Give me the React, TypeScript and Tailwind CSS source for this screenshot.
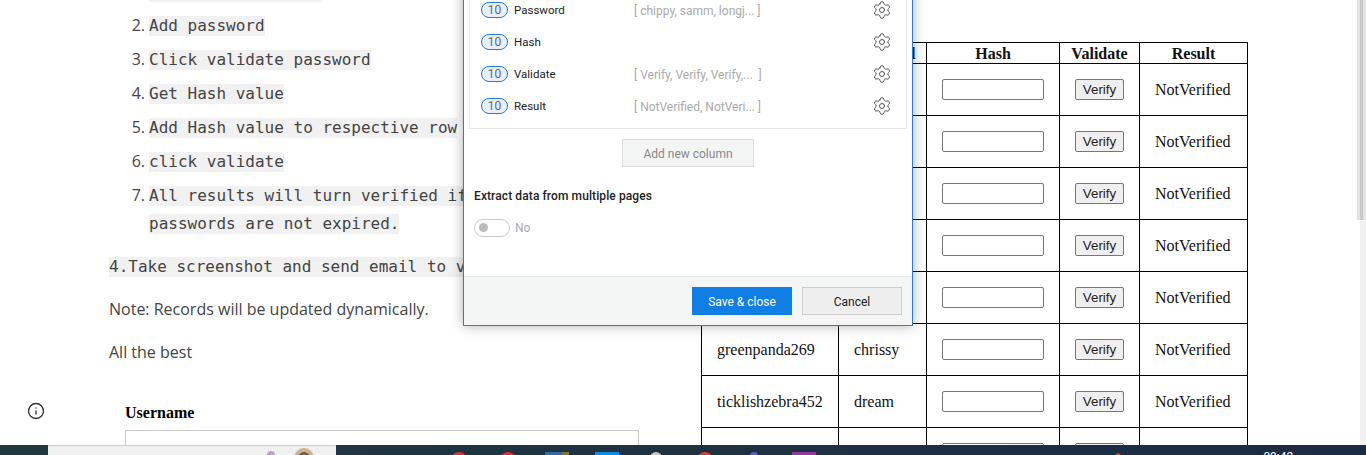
import { Info, Settings } from "lucide-react";

const steps = [
  ["1.", ["Open password page"]],
  ["2.", ["Add password"]],
  ["3.", ["Click validate password"]],
  ["4.", ["Get Hash value"]],
  ["5.", ["Add Hash value to respective row"]],
  ["6.", ["click validate"]],
  ["7.", ["All results will turn verified if", "passwords are not expired."]],
] as const;

const columns = [
  { name: "Password", preview: "[ chippy, samm, longj... ]" },
  { name: "Hash", preview: "" },
  { name: "Validate", preview: "[ Verify, Verify, Verify,...  ]" },
  { name: "Result", preview: "[ NotVerified, NotVeri... ]" },
];

const rows = [
  ["", ""],
  ["", ""],
  ["", ""],
  ["", ""],
  ["", ""],
  ["greenpanda269", "chrissy"],
  ["ticklishzebra452", "dream"],
  ["", ""],
];

function TableRow({ row }: { row: string[] }) {
  return (
    <tr className="h-[52px]">
      <td className="border border-black pl-[15px]">{row[0]}</td>
      <td className="border border-black pl-[15px]">{row[1]}</td>
      <td className="border border-black">
        <input className="mx-auto block h-[21px] w-[102px] rounded-[2px] border border-[#767676] bg-white" />
      </td>
      <td className="border border-black">
        <button className="mx-auto block h-[21px] w-[49px] rounded-[2px] border border-[#767676] bg-[#efefef] font-['Liberation_Sans',sans-serif] text-[13.33px] leading-none text-[#222]">
          Verify
        </button>
      </td>
      <td className="border border-black pl-[15px]">NotVerified</td>
    </tr>
  );
}

function ExtractDialog() {
  return (
    <div className="absolute left-[463px] top-[-10px] z-10 flex h-[336px] w-[450px] flex-col border border-[#2b7cd3] bg-white font-['Roboto',sans-serif] text-[12px] shadow-[0_0_12px_rgba(0,0,0,0.3)]">
      <div className="mx-[5px] mt-[2px] border border-[#e6e6e6] pb-[6px] pl-[11px] pr-[14px]">
        {columns.map((col) => (
          <div key={col.name} className="flex h-8 items-center">
            <span className="flex h-[16px] w-[27px] items-center justify-center rounded-full border border-[#2b7cd3] bg-[#e6f0fb] text-[12px] text-[#666]">
              10
            </span>
            <span className="ml-[6px] w-[120px] pt-px text-[11.5px] text-[#222]">{col.name}</span>
            <span className="flex-1 whitespace-pre pt-px text-[#aaa]">{col.preview}</span>
            <Settings size={20} strokeWidth={1.2} className="-mt-px text-[#555]" />
          </div>
        ))}
      </div>
      <button className="mx-auto mt-[10px] h-[28px] w-[132px] border border-[#ddd] bg-[#f4f5f5] pt-px text-[#888]">
        Add new column
      </button>
      <div className="ml-[10px] mt-5 font-medium tracking-[0.1px] text-[#222]">Extract data from multiple pages</div>
      <div className="ml-[10px] mt-[13px] flex items-center gap-[5px] text-[#aaa]">
        <span className="flex h-[18px] w-[36px] items-center rounded-full border border-[#ccc] pl-[4px]">
          <span className="size-[9px] rounded-full bg-[#bbb]" />
        </span>
        <span className="pt-px">No</span>
      </div>
      <div className="mt-auto flex h-[49px] items-start justify-end gap-[10px] border-t border-[#e6e6e6] bg-[#f4f5f5] pr-[10px] pt-[10px]">
        <button className="h-[28px] w-[100px] bg-[#107ee4] pt-px text-white">Save &amp; close</button>
        <button className="h-[28px] w-[100px] border border-[#ccc] bg-[#eeeeef] pt-px text-[#222]">Cancel</button>
      </div>
    </div>
  );
}

function Taskbar() {
  const icons = [
    "h-4 w-4 rounded-full bg-[#d9342b]",
    "h-4 w-4 rounded-full bg-[#d9342b]",
    "h-4 w-6 bg-[linear-gradient(90deg,#2e6da4_70%,#8a6d2f_70%)]",
    "h-4 w-6 bg-[#0f8be6]",
    "h-4 w-3 rounded-full bg-[#c8c8c8]",
    "h-4 w-4 rounded-full bg-[#d9402b]",
    "h-4 w-2 rounded-full bg-[#5a5ac8]",
    "h-4 w-6 bg-[#8e3aa0]",
  ];
  return (
    <div className="flex h-[10px] shrink-0 overflow-hidden bg-[linear-gradient(90deg,#20383f,#1c2b44)]">
      <div className="relative ml-12 h-[10px] w-[288px] border-t border-[#ccc] bg-[#f0f0f0]">
        <span className="absolute left-[219px] top-[5px] h-3 w-2 rounded-t-full bg-[#b9a3cc]" />
        <span className="absolute left-[246px] top-[2px] h-5 w-5 rounded-full border-[4px] border-[#cdb48c] bg-[#7a5c3e]" />
      </div>
      <div className="ml-[98px] flex">
        {icons.map((cls, i) => (
          <div key={i} className="flex w-[49.3px] justify-center pt-[7px]">
            <span className={cls} />
          </div>
        ))}
      </div>
      <div className="ml-[287px] pt-2">
        <span className="block size-[6px] rounded-full bg-[#e0342b]" />
      </div>
      <span className="ml-[142px] pt-[5px] font-['Roboto',sans-serif] text-[12px] leading-[14px] text-white">09:42</span>
    </div>
  );
}

export default function App() {
  return (
    <div className="relative flex h-[455px] w-[1366px] flex-col overflow-hidden bg-white">
      <ExtractDialog />
      <div className="flex h-[445px] overflow-hidden">
        <div className="relative w-[701px] shrink-0 pl-[109px] font-['Open_Sans',sans-serif] text-[16px] leading-6 text-[#444]">
          <ol className="mt-[-18px]">
            {steps.map(([num, lines]) => (
              <li key={num} className="mb-[14px] flex">
                <span className="-mt-px w-[36px] text-right leading-5">{num}</span>
                <div className="ml-1 flex flex-col gap-2">
                  {lines.map((line) => (
                    <code
                      key={line}
                      className="h-5 w-fit whitespace-pre bg-[#f1f1f1] font-['DejaVu_Sans_Mono',monospace] text-[16px] leading-5 text-[#444]"
                    >
                      {line}
                    </code>
                  ))}
                </div>
              </li>
            ))}
          </ol>
          <code className="mt-[23px] block h-5 w-fit whitespace-pre bg-[#f1f1f1] font-['DejaVu_Sans_Mono',monospace] text-[16px] leading-5 text-[#444]">
            4.Take screenshot and send email to v
          </code>
          <p className="mt-5">Note: Records will be updated dynamically.</p>
          <p className="mt-[19px]">All the best</p>
          <label className="ml-4 mt-[39px] block font-['Liberation_Serif',serif] font-bold leading-5 text-black">
            Username
          </label>
          <div className="ml-4 mt-[7px] h-8 w-[514px] border border-[#ccc]" />
          <Info size={18} strokeWidth={1.8} className="absolute left-[27px] top-[402px] text-[#333]" />
        </div>
        <div className="flex-1 pt-[42px]">
          <table className="w-[547px] table-fixed border-collapse font-['Liberation_Serif',serif] text-[16px] text-[#111]">
            <colgroup>
              <col className="w-[137px]" />
              <col className="w-[88px]" />
              <col className="w-[133px]" />
              <col className="w-[80px]" />
              <col className="w-[108px]" />
            </colgroup>
            <thead>
              <tr className="h-[21px]">
                {["Username", "Password", "Hash", "Validate", "Result"].map((h) => (
                  <th key={h} className="border border-black p-0 pt-px font-bold leading-[18px]">
                    {h}
                  </th>
                ))}
              </tr>
            </thead>
            <tbody>
              {rows.map((row, i) => (
                <TableRow key={i} row={row} />
              ))}
            </tbody>
          </table>
        </div>
        <div className="flex w-[9px] shrink-0 flex-col items-end">
          <div className="h-[220px] w-[9px] border-x-[3px] border-[#e2e2e2] bg-[#c9c9c9]" />
          <div className="w-[6px] flex-1 bg-[#f1f1f1]" />
        </div>
      </div>
      <Taskbar />
    </div>
  );
}
